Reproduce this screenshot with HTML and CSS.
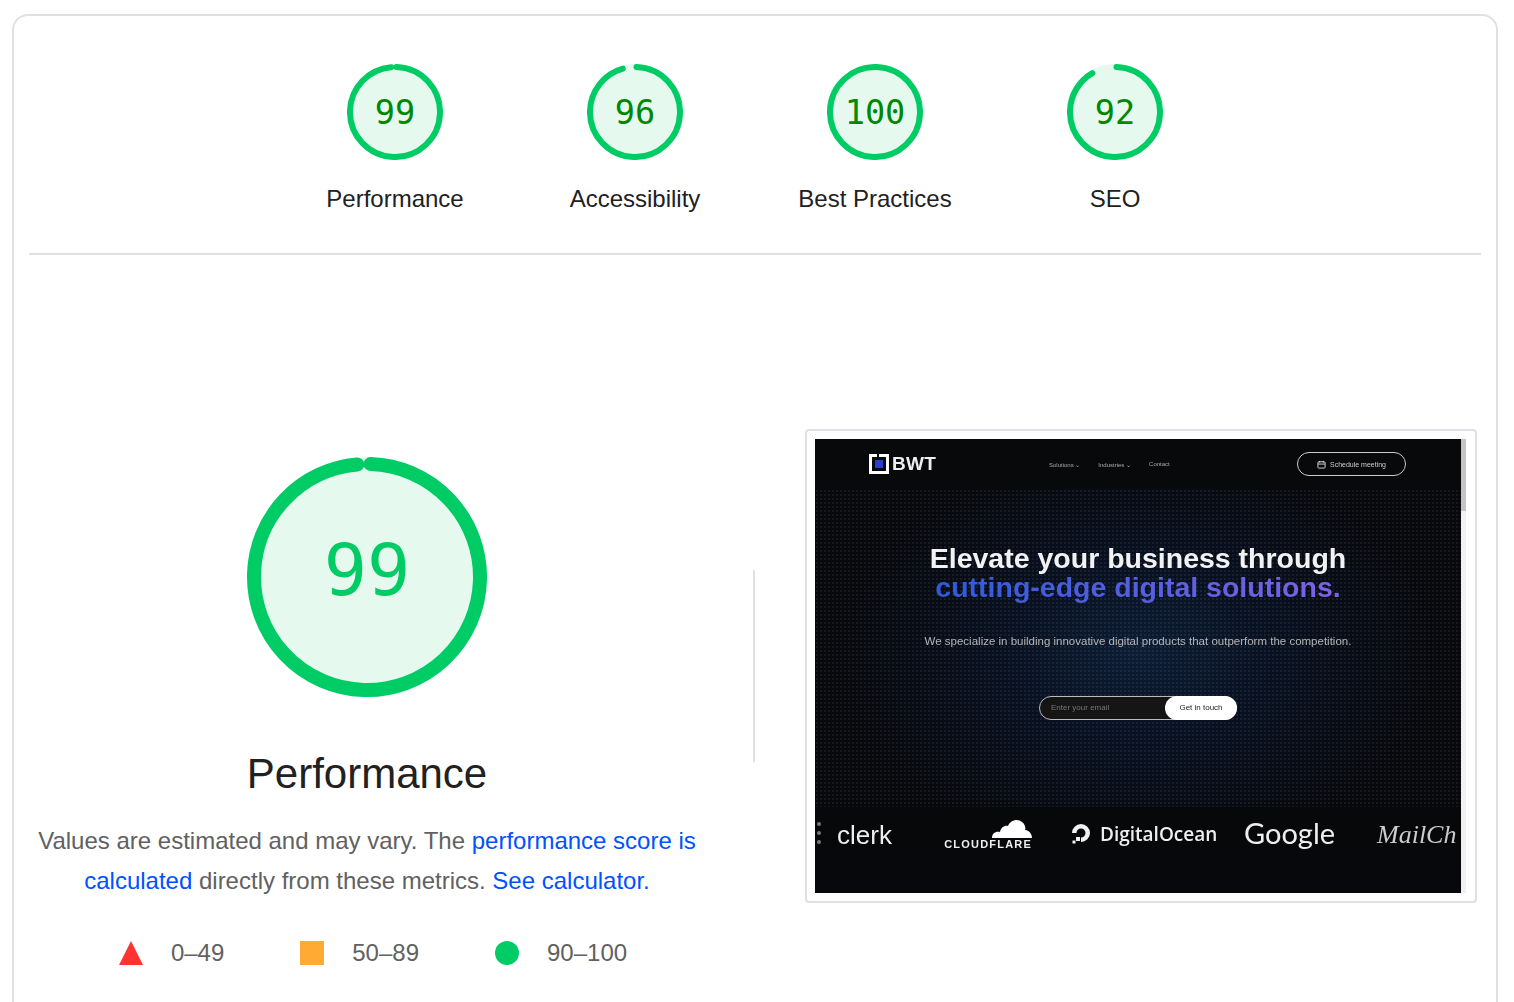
FILE: index.html
```html
<!DOCTYPE html>
<html lang="en">
<head>
<meta charset="utf-8">
<title>Lighthouse report</title>
<link rel="stylesheet" href="styles.css">
</head>
<body>
<main class="card">
  <section class="scores">
    <a class="score">
      <span class="gauge">
        <svg class="gauge-svg" viewBox="0 0 96 96"><circle class="ring-base" cx="48" cy="48" r="45" stroke-width="6"/><circle class="ring-arc" cx="48" cy="48" r="45" stroke-width="6" stroke-dasharray="276.91 282.74" transform="rotate(-88.09 48 48)"/></svg>
        <span class="gauge-num">99</span>
      </span>
      <span class="score-label">Performance</span>
    </a>
    <a class="score">
      <span class="gauge">
        <svg class="gauge-svg" viewBox="0 0 96 96"><circle class="ring-base" cx="48" cy="48" r="45" stroke-width="6"/><circle class="ring-arc" cx="48" cy="48" r="45" stroke-width="6" stroke-dasharray="268.43 282.74" transform="rotate(-88.09 48 48)"/></svg>
        <span class="gauge-num">96</span>
      </span>
      <span class="score-label">Accessibility</span>
    </a>
    <a class="score">
      <span class="gauge">
        <svg class="gauge-svg" viewBox="0 0 96 96"><circle class="ring-base" cx="48" cy="48" r="45" stroke-width="6"/><circle class="ring-arc" cx="48" cy="48" r="45" stroke-width="6" stroke-dasharray="282.74 282.74" transform="rotate(-88.09 48 48)"/></svg>
        <span class="gauge-num">100</span>
      </span>
      <span class="score-label">Best Practices</span>
    </a>
    <a class="score">
      <span class="gauge">
        <svg class="gauge-svg" viewBox="0 0 96 96"><circle class="ring-base" cx="48" cy="48" r="45" stroke-width="6"/><circle class="ring-arc" cx="48" cy="48" r="45" stroke-width="6" stroke-dasharray="257.12 282.74" transform="rotate(-88.09 48 48)"/></svg>
        <span class="gauge-num">92</span>
      </span>
      <span class="score-label">SEO</span>
    </a>
  </section>
  <hr class="rule">
  <section class="detail">
    <div class="summary">
      <div class="gauge-big">
        <svg class="gauge-big-svg" viewBox="0 0 240 240"><circle class="ring-base" cx="120" cy="120" r="113" stroke-width="14"/><circle class="ring-arc" cx="120" cy="120" r="113" stroke-width="14" stroke-dasharray="695.9 710" transform="rotate(-88.23 120 120)"/></svg>
        <span class="gauge-big-num">99</span>
      </div>
      <h2 class="summary-title">Performance</h2>
      <p class="summary-text">Values are estimated and may vary. The <a class="link">performance score is calculated</a> directly from these metrics. <a class="link">See calculator.</a></p>
      <ul class="legend">
        <li class="legend-item"><svg class="legend-icon" viewBox="0 0 24 24"><polygon class="fail" points="12,0 24,24 0,24"/></svg><span>0–49</span></li>
        <li class="legend-item"><svg class="legend-icon" viewBox="0 0 24 24"><rect class="average" width="24" height="24"/></svg><span>50–89</span></li>
        <li class="legend-item"><svg class="legend-icon" viewBox="0 0 24 24"><circle class="pass" cx="12" cy="12" r="12"/></svg><span>90–100</span></li>
      </ul>
    </div>
    <div class="vline"></div>
    <figure class="shot">
      <div class="screen">
        <div class="page">
          <header class="nav">
            <div class="brand">
              <svg class="brand-mark" viewBox="0 0 20 20"><path class="mark-frame" d="M0 0H8V3H3V17H17V3H10V0H20V20H0Z"/><rect class="mark-core" x="6" y="6" width="8" height="8"/></svg>
              <span class="brand-name">BWT</span>
            </div>
            <nav class="nav-links"><span>Solutions ⌄</span><span>Industries ⌄</span><span>Contact</span></nav>
            <div class="nav-btn">
              <svg class="cal" viewBox="0 0 10 10"><rect x="1" y="2" width="8" height="7" rx="1"/><path d="M1 4.5H9M3 1V3M7 1V3"/></svg>
              <span>Schedule meeting</span>
            </div>
          </header>
          <div class="hero">
            <h1 class="hero-title">Elevate your business through<br><span class="grad">cutting-edge digital solutions.</span></h1>
            <p class="hero-text">We specialize in building innovative digital products that outperform the competition.</p>
            <div class="form"><span class="form-input">Enter your email</span><span class="form-btn">Get in touch</span></div>
            <h3 class="partners">Our partners and providers</h3>
          </div>
          <div class="logos">
            <span class="clerk-mark"></span>
            <span class="logo-clerk">clerk</span>
            <span class="logo-cf">
              <svg class="cloud" viewBox="0 0 40 20"><path d="M0 20C0 15 4 13 8 14C9 9 13 7 16 8C18 2 26 0 30 4C33 6 34 10 33 12C37 12 40 16 40 20Z"/></svg>
              <span class="cf-text">CLOUDFLARE</span>
            </span>
            <svg class="do-mark" viewBox="0 0 24 24"><path d="M12 21V16.5A4.5 4.5 0 1 0 7.5 12H3A9 9 0 1 1 12 21Z"/><rect x="7" y="16" width="4" height="4"/><rect x="3.500" y="19.500" width="3" height="3"/></svg>
            <span class="logo-do">DigitalOcean</span>
            <span class="logo-google">Google</span>
            <span class="logo-mail">MailCh</span>
          </div>
        </div>
        <div class="scrollbar"><div class="thumb"></div></div>
      </div>
    </figure>
  </section>
</main>
</body>
</html>
```
FILE: styles.css
```css
* { box-sizing: border-box; }
html, body { margin: 0; height: 1002px; overflow: hidden; background: #fff; }
body { padding: 14px 16px 0 12px; font-family: "Liberation Sans", Arial, sans-serif; }
.card { border: 2px solid #dfe0e4; border-radius: 16px; height: 1100px; padding: 0 15px; width: 1486px; }

.scores { display: flex; justify-content: center; padding-top: 48px; }
.score { width: 240px; display: flex; flex-direction: column; align-items: center; }
.gauge { width: 96px; height: 96px; display: grid; place-items: center; }
.gauge-svg, .gauge-num { grid-area: 1 / 1; }
.gauge-svg { width: 96px; height: 96px; display: block; }
.ring-base { fill: #e5f9ef; stroke: #e5f9ef; }
.ring-arc { fill: none; stroke: #00cc66; stroke-linecap: round; }
.gauge-num { font: 33.6px/1 "DejaVu Sans Mono", monospace; color: #008800; position: relative; top: 1px; }
.score-label { font-size: 24px; line-height: 30px; color: #212121; margin-top: 24px; white-space: nowrap; }

.rule { border: 0; height: 2px; background: #e0e0e0; margin: 39px 0 0; }

.detail { display: flex; align-items: flex-start; margin-top: 174px; }
.summary { width: 676px; display: flex; flex-direction: column; align-items: center; padding-top: 28px; }
.gauge-big { width: 240px; height: 240px; display: grid; place-items: center; }
.gauge-big-svg, .gauge-big-num { grid-area: 1 / 1; }
.gauge-big-svg { width: 240px; height: 240px; display: block; }
.gauge-big-num { font: 72px/1 "DejaVu Sans Mono", monospace; color: #00cc66; position: relative; top: -7px; }
.summary-title { font-weight: 400; font-size: 42px; line-height: 50px; color: #212121; margin: 52px 0 0; }
.summary-text { font-size: 24px; line-height: 40px; color: #616161; text-align: center; margin: 22px 0 0; width: 676px; }
.link { color: #0051ff; }
.legend { list-style: none; display: flex; gap: 76px; margin: 36px 0 0; padding: 0 0 0 12px; font-size: 24px; line-height: 32px; color: #616161; }
.legend-item { display: flex; align-items: center; gap: 28px; }
.legend-icon { width: 24px; height: 24px; display: block; }
.fail { fill: #ff3333; }
.average { fill: #ffaa33; }
.pass { fill: #00cc66; }

.vline { width: 2px; height: 192px; background: #e0e0e0; margin: 141px 0 0 48px; }
.shot { width: 672px; height: 474px; margin: 0 0 0 50px; padding: 8px 9px 8px 8px; border: 2px solid #dfe0e4; border-radius: 4px; }
.screen { display: flex; height: 454px; overflow: hidden; }
.page { width: 646px; height: 454px; background: radial-gradient(ellipse 300px 200px at 50% 47%, #0c1d35 0%, #081020 45%, #07080c 100%), #07080c; overflow: hidden; color: #fff; filter: blur(.45px); }
.scrollbar { width: 5px; background: #f1f1f1; }
.thumb { height: 72px; background: #c4c4c4; }

.nav { height: 50px; background: #08090b; display: flex; align-items: center; padding: 0 55px 0 54px; }
.brand { display: flex; align-items: center; gap: 3px; width: 180px; }
.brand-mark { width: 20px; height: 20px; }
.mark-frame { fill: #fff; }
.mark-core { fill: #2a3fd0; }
.brand-name { font-size: 19px; font-weight: 700; line-height: 20px; letter-spacing: .3px; color: #eee; }
.nav-links { display: flex; gap: 18px; font-size: 6px; color: #aaa; width: 248px; }
.nav-btn { width: 109px; height: 24px; border: 1.5px solid #ccc; border-radius: 12px; display: flex; align-items: center; justify-content: center; gap: 4px; font-size: 7px; color: #ccc; }
.cal { width: 9px; height: 9px; fill: none; stroke: #ddd; stroke-width: 1; }

.hero { height: 355px; padding-top: 55px; text-align: center; background-image: radial-gradient(circle, rgba(255,255,255,.07) .8px, transparent 1.1px); background-size: 4px 4px; }
.hero-title { margin: 0; font-size: 28.5px; line-height: 29px; font-weight: 700; color: #f2f2f2; }
.grad { background: linear-gradient(90deg, #2c5bd8, #5a5fe0 55%, #7d63e4); background-clip: text; -webkit-background-clip: text; color: transparent; }
.hero-text { margin: 32px 0 0; font-size: 11.5px; line-height: 14px; color: #b5b5b5; }
.form { width: 198px; height: 24px; margin: 48px auto 0; display: flex; border: 1px solid #bbb; border-radius: 12px; background: #151515; }
.form-input { flex: 1; font-size: 8px; line-height: 22px; color: #777; text-align: left; padding-left: 11px; }
.form-btn { width: 72px; margin: -1px; height: 24px; background: #fff; border-radius: 12px; color: #222; font-size: 8px; line-height: 24px; }
.partners { margin: 113px 0 0; font-size: 14px; line-height: 16px; font-weight: 700; color: #8a8a8a; }

.logos { height: 49px; display: flex; align-items: flex-start; overflow: hidden; background: #07080a; position: relative; margin-top: -37px; color: #eee; }
.clerk-mark { width: 8px; height: 22px; margin: 15px 12px 0 2px; border-left: 4px dotted #777; }
.logo-clerk { font-size: 26px; line-height: 30px; margin-top: 13px; width: 114px; }
.logo-cf { width: 81px; margin: 11px 37px 0 0; display: flex; flex-direction: column; align-items: flex-end; flex: none; }
.cloud { width: 40px; height: 20px; fill: #fff; }
.cf-text { font-size: 11px; line-height: 12px; font-weight: 700; letter-spacing: 1.2px; white-space: nowrap; }
.do-mark { width: 24px; height: 24px; margin: 14px 7px 0 0; fill: #f2f2f2; flex: none; }
.logo-do { font-family: "Open Sans", sans-serif; font-size: 19px; line-height: 26px; margin-top: 14px; width: 144px; white-space: nowrap; font-weight: 600; }
.logo-google { font-family: "Lato", sans-serif; font-size: 29px; line-height: 34px; margin-top: 9px; width: 133px; }
.logo-mail { font-family: "Liberation Serif", serif; font-style: italic; font-size: 26px; line-height: 30px; margin-top: 13px; color: #ccc; white-space: nowrap; }
```
